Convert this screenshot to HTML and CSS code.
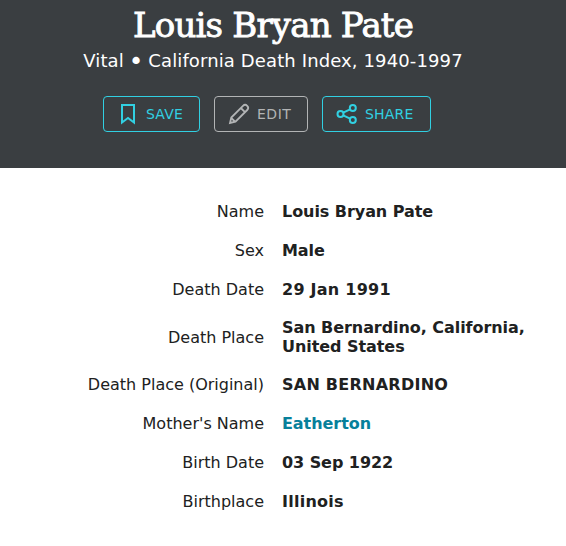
FILE: index.html
```html
<!DOCTYPE html>
<html lang="en">
  <head>
    <meta charset="utf-8">
    <title>Louis Bryan Pate</title>
    <link rel="stylesheet" href="styles.css">
  </head>
  <body>
    <header class="record-header">
      <h1 class="record-name">Louis Bryan Pate</h1>
      <p class="record-type">Vital <span class="dot">•</span> California Death Index, 1940-1997</p>
      <div class="actions">
        <button class="btn btn-save">
          <svg class="icon" width="24" height="24" viewBox="0 0 24 24"><path d="M6 3h12v17.500l-6-4.500-6 4.500z"/></svg>
          <span>SAVE</span>
        </button>
        <button class="btn btn-edit">
          <svg class="icon" width="24" height="24" viewBox="0 0 24 24"><path d="M3 21l1.300-5.500L16 3.800a2.900 2.900 0 0 1 4.200 4.200L8.500 19.700zM13.800 6l4.200 4.200M4.500 16.200l3.300 3.300"/></svg>
          <span>EDIT</span>
        </button>
        <button class="btn btn-share">
          <svg class="icon" width="24" height="24" viewBox="0 0 24 24"><circle cx="5.500" cy="12" r="3"/><circle cx="17.800" cy="6" r="3"/><circle cx="17.800" cy="18" r="3"/><path d="M8.200 10.700l6.900-3.400M8.200 13.300l6.900 3.400"/></svg>
          <span>SHARE</span>
        </button>
      </div>
    </header>

    <table class="facts">
      <tr><th>Name</th><td>Louis Bryan Pate</td></tr>
      <tr><th>Sex</th><td>Male</td></tr>
      <tr><th>Death Date</th><td class="wide">29 Jan 1991</td></tr>
      <tr class="tall"><th>Death Place</th><td>San Bernardino, California,<br>United States</td></tr>
      <tr><th>Death Place (Original)</th><td class="wide">SAN BERNARDINO</td></tr>
      <tr><th>Mother's Name</th><td><a href="#">Eatherton</a></td></tr>
      <tr><th>Birth Date</th><td>03 Sep 1922</td></tr>
      <tr><th>Birthplace</th><td class="wide">Illinois</td></tr>
    </table>
  </body>
</html>
```

FILE: styles.css
```css
body {
  margin: 0;
  background: #fff;
  color: #202121;
  font-family: Verdana, "DejaVu Sans", sans-serif;
  font-size: 16px;
}
.record-header {
  box-sizing: border-box;
  height: 168px;
  padding-right: 20px;
  background: #3a3e41;
  color: #fff;
  text-align: center;
}
.record-name {
  margin: 0;
  height: 48px;
  line-height: 50px;
  font-family: "Museo Slab", "DejaVu Serif", serif;
  font-size: 34px;
  font-weight: normal;
  letter-spacing: -0.8px;
  -webkit-text-stroke: 0.9px #fff;
  white-space: nowrap;
}
.record-type {
  margin: 0;
  height: 48px;
  line-height: 26px;
  font-size: 18px;
  letter-spacing: 0.12px;
  white-space: nowrap;
}
.dot {
  -webkit-text-stroke: 2px #fff;
  margin: 0 1px;
}
.actions {
  display: flex;
  gap: 14px;
  padding-left: 103px;
}
.btn {
  box-sizing: border-box;
  display: flex;
  align-items: center;
  gap: 6px;
  height: 36px;
  padding: 0 0 0 12px;
  background: none;
  border: 1px solid #31d0e2;
  border-radius: 4px;
  color: #31d0e2;
  font-family: inherit;
  font-size: 14px;
  letter-spacing: 0.2px;
  cursor: pointer;
}
.btn-save {
  width: 97px;
}
.btn-edit {
  width: 94px;
  border-color: #b2b4b5;
  color: #b2b4b5;
  letter-spacing: 0.5px;
}
.btn-share {
  width: 109px;
}
.icon {
  flex: none;
  fill: none;
  stroke: currentColor;
  stroke-width: 2;
}
.btn-edit .icon {
  stroke-width: 1.8;
}
.facts {
  width: 566px;
  margin-top: 24px;
  border-collapse: collapse;
  table-layout: fixed;
  line-height: 19px;
}
.facts tr {
  height: 39px;
}
.facts .tall {
  height: 56px;
}
.facts th {
  box-sizing: border-box;
  width: 282px;
  padding: 9px 18px 9px 0;
  font-weight: normal;
  text-align: right;
}
.facts td {
  padding: 9px 0;
  font-weight: bold;
  letter-spacing: -0.06px;
}
.facts .wide {
  letter-spacing: 0.25px;
}
.facts a {
  color: #07809b;
  text-decoration: none;
}
```
